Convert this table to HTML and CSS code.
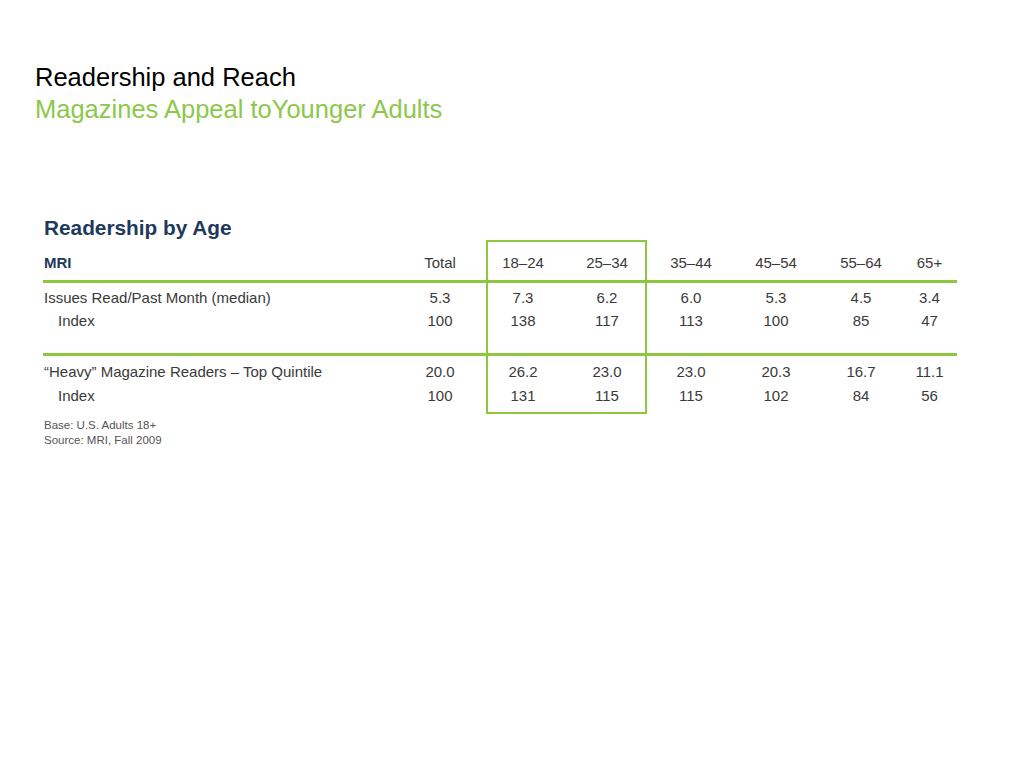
FILE: index.html
```html
<!DOCTYPE html>
<html lang="en">
<head>
<meta charset="utf-8">
<title>Readership and Reach</title>
<link rel="stylesheet" href="styles.css">
</head>
<body>
<div class="page">
  <header class="titles">
    <h1 class="title">Readership and Reach</h1>
    <h2 class="subtitle">Magazines Appeal toYounger Adults</h2>
  </header>

  <section class="chart">
    <h3 class="chart-title">Readership by Age</h3>
    <div class="table">
      <div class="highlight"></div>

      <div class="cell head label">MRI</div>
      <div class="cell head">Total</div>
      <div class="cell head">18–24</div>
      <div class="cell head">25–34</div>
      <div class="cell head">35–44</div>
      <div class="cell head">45–54</div>
      <div class="cell head">55–64</div>
      <div class="cell head">65+</div>

      <div class="rule"></div>
      <div class="spacer"></div>

      <div class="cell label">Issues Read/Past Month (median)</div>
      <div class="cell">5.3</div>
      <div class="cell">7.3</div>
      <div class="cell">6.2</div>
      <div class="cell">6.0</div>
      <div class="cell">5.3</div>
      <div class="cell">4.5</div>
      <div class="cell">3.4</div>

      <div class="cell label indent">Index</div>
      <div class="cell">100</div>
      <div class="cell">138</div>
      <div class="cell">117</div>
      <div class="cell">113</div>
      <div class="cell">100</div>
      <div class="cell">85</div>
      <div class="cell">47</div>

      <div class="spacer"></div>
      <div class="rule"></div>
      <div class="spacer"></div>

      <div class="cell label">“Heavy” Magazine Readers – Top Quintile</div>
      <div class="cell">20.0</div>
      <div class="cell">26.2</div>
      <div class="cell">23.0</div>
      <div class="cell">23.0</div>
      <div class="cell">20.3</div>
      <div class="cell">16.7</div>
      <div class="cell">11.1</div>

      <div class="cell label indent">Index</div>
      <div class="cell">100</div>
      <div class="cell">131</div>
      <div class="cell">115</div>
      <div class="cell">115</div>
      <div class="cell">102</div>
      <div class="cell">84</div>
      <div class="cell">56</div>

      <div class="spacer"></div>
    </div>
    <div class="notes">
      <p>Base: U.S. Adults 18+</p>
      <p>Source: MRI, Fall 2009</p>
    </div>
  </section>
</div>
</body>
</html>
```

FILE: styles.css
```css
* { box-sizing: border-box; }

html, body {
  margin: 0;
  padding: 0;
  background: #ffffff;
}

body {
  font-family: "Liberation Sans", Arial, Helvetica, sans-serif;
  color: #333333;
}

.page {
  width: 1024px;
  height: 768px;
  padding: 62px 0 0 0;
}

.titles {
  padding-left: 35px;
}

.title,
.subtitle {
  margin: 0;
  font-size: 25.5px;
  line-height: 31.5px;
  font-weight: normal;
}

.title { color: #000000; }
.subtitle { color: #8cc84b; }

.chart {
  margin-top: 91px;
  padding-left: 43px;
}

.chart-title {
  margin: 0 0 0 1px;
  font-size: 20.8px;
  line-height: 24px;
  font-weight: bold;
  color: #1d3a5c;
}

.table {
  position: relative;
  display: grid;
  width: 914px;
  grid-template-columns: 355px 84px 82px 86px 82px 88px 82px 55px;
  grid-template-rows: 40px 3px 3px 23px 23px 21px 3px 3px 24px 24px 7px;
  font-size: 15px;
  color: #3a3a3a;
}

.highlight {
  position: absolute;
  grid-column: 3 / 5;
  grid-row: 1 / -1;
  top: 0;
  bottom: 0;
  left: 4px;
  right: 3px;
  border: 2.5px solid #8dc63f;
}

.cell {
  display: flex;
  align-items: center;
  justify-content: center;
  line-height: 17px;
  white-space: nowrap;
}

.cell.head {
  align-items: flex-end;
  padding-bottom: 9px;
}

.cell.label {
  justify-content: flex-start;
  padding-left: 1px;
}

.cell.head.label {
  font-weight: bold;
  color: #1d3a5c;
}

.cell.indent {
  padding-left: 15px;
}

.rule {
  grid-column: 1 / -1;
  background: #8dc63f;
}

.spacer {
  grid-column: 1 / -1;
}

.notes {
  margin-top: 4px;
  padding-left: 1px;
  font-size: 11.5px;
  line-height: 15px;
  color: #555555;
}

.notes p {
  margin: 0;
}
```
